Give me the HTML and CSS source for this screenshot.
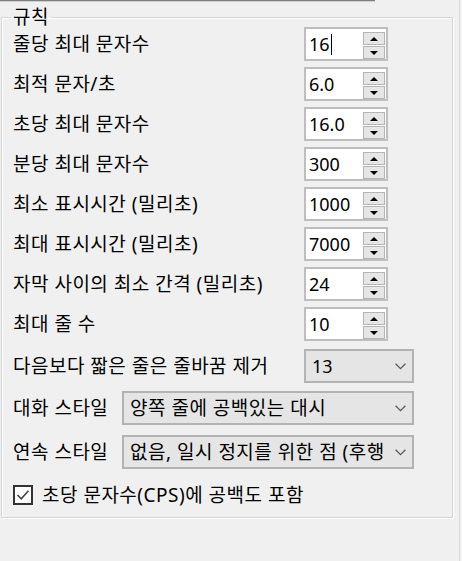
FILE: index.html
```html
<!DOCTYPE html>
<html lang="ko">
<head>
<meta charset="utf-8">
<title>규칙</title>
<link rel="stylesheet" href="styles.css">
</head>
<body>
<div class="page">
  <div class="topline"></div>
  <fieldset class="group">
    <legend class="legend">규칙</legend>
    <div class="rows">
      <div class="row">
        <span class="label">줄당 최대 문자수</span>
        <div class="spin">
          <span class="value">16<span class="caret"></span></span>
          <div class="spin-btns"><span class="btn up"></span><span class="btn down"></span></div>
        </div>
      </div>
      <div class="row">
        <span class="label">최적 문자/초</span>
        <div class="spin">
          <span class="value">6.0</span>
          <div class="spin-btns"><span class="btn up"></span><span class="btn down"></span></div>
        </div>
      </div>
      <div class="row">
        <span class="label">초당 최대 문자수</span>
        <div class="spin">
          <span class="value">16.0</span>
          <div class="spin-btns"><span class="btn up"></span><span class="btn down"></span></div>
        </div>
      </div>
      <div class="row">
        <span class="label">분당 최대 문자수</span>
        <div class="spin">
          <span class="value">300</span>
          <div class="spin-btns"><span class="btn up"></span><span class="btn down"></span></div>
        </div>
      </div>
      <div class="row">
        <span class="label">최소 표시시간 (밀리초)</span>
        <div class="spin">
          <span class="value">1000</span>
          <div class="spin-btns"><span class="btn up"></span><span class="btn down"></span></div>
        </div>
      </div>
      <div class="row">
        <span class="label">최대 표시시간 (밀리초)</span>
        <div class="spin">
          <span class="value">7000</span>
          <div class="spin-btns"><span class="btn up"></span><span class="btn down"></span></div>
        </div>
      </div>
      <div class="row">
        <span class="label">자막 사이의 최소 간격 (밀리초)</span>
        <div class="spin">
          <span class="value">24</span>
          <div class="spin-btns"><span class="btn up"></span><span class="btn down"></span></div>
        </div>
      </div>
      <div class="row">
        <span class="label">최대 줄 수</span>
        <div class="spin">
          <span class="value">10</span>
          <div class="spin-btns"><span class="btn up"></span><span class="btn down"></span></div>
        </div>
      </div>
      <div class="row row-sel">
        <span class="label">다음보다 짧은 줄은 줄바꿈 제거</span>
        <div class="select select-short">
          <span class="sel-text sel-num">13</span>
          <svg class="chev" width="11" height="7" viewBox="0 0 11 7"><polyline points="0.6,0.8 5.5,5.7 10.4,0.8" fill="none" stroke="#5a5a5a" stroke-width="1.3"/></svg>
        </div>
      </div>
      <div class="row row-sel">
        <span class="label label-short">대화 스타일</span>
        <div class="select select-wide">
          <span class="sel-text">양쪽 줄에 공백있는 대시</span>
          <svg class="chev" width="11" height="7" viewBox="0 0 11 7"><polyline points="0.6,0.8 5.5,5.7 10.4,0.8" fill="none" stroke="#5a5a5a" stroke-width="1.3"/></svg>
        </div>
      </div>
      <div class="row row-sel3">
        <span class="label label-short">연속 스타일</span>
        <div class="select select-wide">
          <span class="sel-text">없음, 일시 정지를 위한 점 (후행 점)</span>
          <svg class="chev" width="11" height="7" viewBox="0 0 11 7"><polyline points="0.6,0.8 5.5,5.7 10.4,0.8" fill="none" stroke="#5a5a5a" stroke-width="1.3"/></svg>
        </div>
      </div>
      <label class="check-row">
        <span class="checkbox">
          <svg width="16" height="16" viewBox="0 0 16 16"><polyline points="2.5,8 6.2,11.8 13.5,3.8" fill="none" stroke="#444" stroke-width="1.6"/></svg>
        </span>
        <span class="check-text">초당 문자수(CPS)에 공백도 포함</span>
      </label>
    </div>
  </fieldset>
</div>
</body>
</html>
```

FILE: styles.css
```css
html, body {
  margin: 0;
  padding: 0;
  background: #f0f0f0;
}

body {
  font-family: "Noto Sans", "Noto Sans CJK KR", sans-serif;
  font-size: 19px;
  letter-spacing: 0.5px;
  color: #000;
  width: 462px;
  height: 561px;
  overflow: hidden;
}

.page {
  width: 459px;
  height: 561px;
  border-right: 1px solid #d9d9d9;
}

.topline {
  width: 375px;
  height: 1px;
  background: #7f7f7f;
  border-bottom: 1px solid #cfcfcf;
}

.group {
  box-sizing: border-box;
  width: 452px;
  margin: 5px 0 0 1px;
  padding: 0 0 12px 11px;
  border: 1px solid #d5d5d5;
  box-shadow: inset 1px 1px 0 #fff, 1px 1px 0 #fff;
  min-width: 0;
}

.legend {
  margin-left: -2px;
  padding: 0 2px;
  line-height: 20px;
}

.rows {
  display: flex;
  flex-direction: column;
  gap: 6px;
}

.row {
  display: flex;
  align-items: center;
  height: 34px;
}

.row-sel {
  margin-top: 2px;
}

.row-sel3 {
  margin-top: 4px;
}

.label {
  width: 291px;
  flex: none;
  line-height: 22px;
  white-space: nowrap;
}

.label-short {
  width: 109px;
}

.spin {
  box-sizing: border-box;
  width: 84px;
  height: 34px;
  border: 2px solid #bfbfbf;
  background: #fff;
  display: flex;
  align-items: flex-start;
  padding: 1px 1px 0 3px;
}

.value {
  flex: 1;
  line-height: 28px;
  font-size: 18px;
  letter-spacing: 0;
  display: flex;
  align-items: center;
}

.caret {
  display: inline-block;
  width: 1.5px;
  height: 21px;
  background: #000;
  margin-left: 1px;
}

.spin-btns {
  display: flex;
  flex-direction: column;
  width: 22px;
  margin-top: 2px;
}

.btn {
  box-sizing: border-box;
  height: 13px;
  border: 1px solid #b4b4b4;
  background: #e6e6e6;
  display: flex;
  align-items: center;
  justify-content: center;
}

.btn.down {
  margin-top: 1px;
}

.btn.up::before {
  content: "";
  border-left: 4px solid transparent;
  border-right: 4px solid transparent;
  border-bottom: 4px solid #000;
}

.btn.down::before {
  content: "";
  border-left: 4px solid transparent;
  border-right: 4px solid transparent;
  border-top: 4px solid #000;
}

.select {
  box-sizing: border-box;
  height: 34px;
  border: 2px solid #b3b3b3;
  background: #e5e5e5;
  display: flex;
  align-items: center;
  padding: 0 6px 0 6px;
  gap: 9px;
}

.select-short {
  width: 110px;
}

.select-wide {
  width: 292px;
}

.sel-text {
  flex: 1;
  min-width: 0;
  overflow: hidden;
  white-space: nowrap;
  line-height: 24px;
}

.sel-num {
  font-size: 18px;
  letter-spacing: 0;
}

.chev {
  flex: none;
  margin-top: 1px;
}

.check-row {
  display: flex;
  align-items: center;
  gap: 9px;
  margin-top: 10px;
  height: 20px;
}

.checkbox {
  box-sizing: border-box;
  width: 20px;
  height: 20px;
  border: 2px solid #333;
  background: #fff;
  display: flex;
  align-items: center;
  justify-content: center;
}

.check-text {
  line-height: 22px;
  white-space: nowrap;
}
```
